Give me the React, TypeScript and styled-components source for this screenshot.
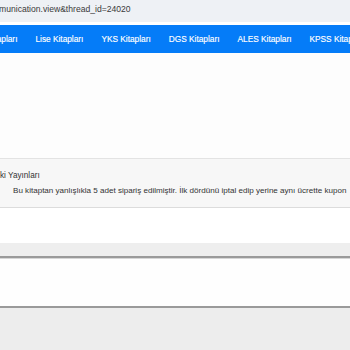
import React from "react";
import styled, { createGlobalStyle } from "styled-components";

const Global = createGlobalStyle`
  html, body { margin: 0; padding: 0; background: #ffffff; overflow: hidden; }
  body { font-family: "Liberation Sans", Arial, sans-serif; }
`;

const Page = styled.div`
  width: 350px;
  height: 350px;
  display: flex;
  flex-direction: column;
  overflow: hidden;
`;

const AddressBar = styled.div`
  height: 22px;
  background: #eef1f5;
  display: flex;
  align-items: center;
  white-space: nowrap;
  overflow: hidden;
  flex: none;
`;

const Url = styled.span`
  font-family: "Liberation Sans", Arial, sans-serif;
  font-size: 8.6px;
  color: #3a3a3a;
  margin-left: -1px;
  margin-top: -5px;
`;

const Gap = styled.div`
  height: 3px;
  background: #ffffff;
  flex: none;
`;

const Nav = styled.nav`
  height: 28px;
  background: #057cf8;
  display: flex;
  align-items: center;
  white-space: nowrap;
  overflow: hidden;
  box-shadow: 0 1px 0 #8cc0f5;
  flex: none;
`;

const NavTrack = styled.div`
  display: flex;
  align-items: center;
  margin-left: -22px;
`;

const NavItem = styled.span`
  color: #ffffff;
  font-size: 8.3px;
  padding: 0 9px;
  flex: none;
  -webkit-text-stroke: 0.15px #ffffff;
`;

const Blank = styled.div<{ $h: number; $bg?: string }>`
  height: ${(p) => p.$h}px;
  background: ${(p) => p.$bg ?? "#ffffff"};
  flex: none;
`;

const Panel = styled.section`
  height: 50px;
  box-sizing: border-box;
  padding-top: 12px;
  background: #f7f7f7;
  border-top: 1px solid #e3e3e3;
  border-bottom: 1px solid #dcdcdc;
  display: flex;
  flex-direction: column;
  gap: 5px;
  flex: none;
`;

const Publisher = styled.div`
  font-size: 8.2px;
  line-height: 10px;
  color: #333333;
  white-space: nowrap;
`;

const Message = styled.div`
  font-size: 8.07px;
  line-height: 10px;
  color: #333333;
  margin-left: 13px;
  white-space: nowrap;
`;

const Band = styled.div`
  height: 13px;
  background: #eeeeee;
  border-bottom: 2px solid #9a9a9a;
  flex: none;
`;

const Box = styled.div`
  height: 47px;
  background: #fefefe;
  border-top: 1px solid #d6d6d6;
  border-bottom: 2px solid #9a9a9a;
  flex: none;
`;

const Footer = styled.div`
  flex: 1;
  background: #ededed;
`;

const navItems = [
  "Kitapları",
  "Lise Kitapları",
  "YKS Kitapları",
  "DGS Kitapları",
  "ALES Kitapları",
  "KPSS Kitapları",
];

export default function App() {
  return (
    <Page>
      <Global />
      <AddressBar>
        <Url>munication.view&amp;thread_id=24020</Url>
      </AddressBar>
      <Gap />
      <Nav>
        <NavTrack>
          {navItems.map((t) => (
            <NavItem key={t}>{t}</NavItem>
          ))}
        </NavTrack>
      </Nav>
      <Blank $h={105} $bg="#fdfdfd" />
      <Panel>
        <Publisher>ki Yayınları</Publisher>
        <Message>
          Bu kitaptan yanlışlıkla 5 adet sipariş edilmiştir. İlk dördünü iptal
          edip yerine aynı ücrette kupon
        </Message>
      </Panel>
      <Blank $h={35} />
      <Band />
      <Box />
      <Footer />
    </Page>
  );
}
